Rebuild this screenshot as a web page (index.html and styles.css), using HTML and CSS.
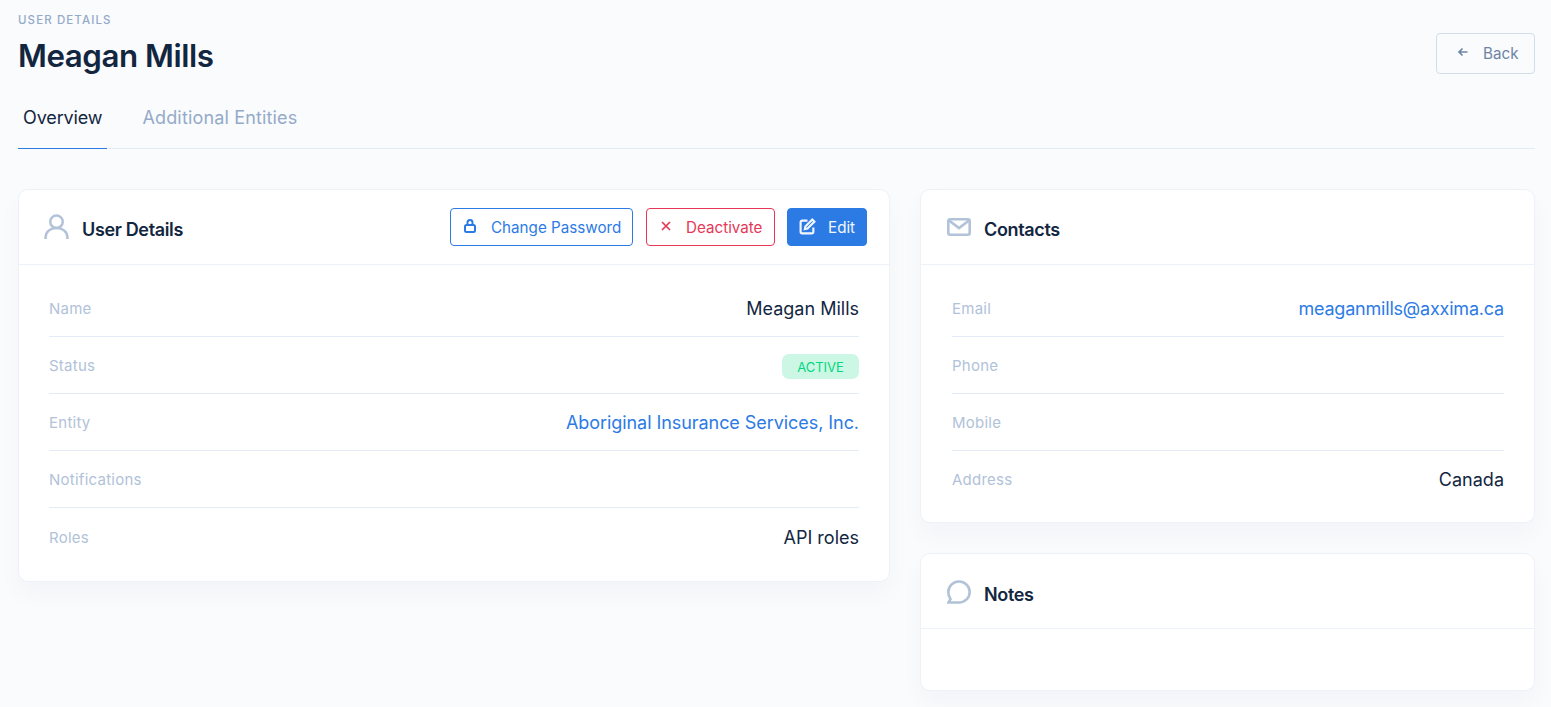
FILE: index.html
```html
<!DOCTYPE html>
<html lang="en">
<head>
<meta charset="utf-8">
<title>Meagan Mills</title>
<link rel="stylesheet" href="styles.css">
</head>
<body>
<div class="page">
  <header class="page-head">
    <div>
      <div class="eyebrow">USER DETAILS</div>
      <h1 class="title">Meagan Mills</h1>
    </div>
    <button class="btn btn-back">
      <svg class="ico-sm" viewBox="0 0 12 12" fill="none" stroke="currentColor" stroke-width="1.6"><path d="M10.500 6H2M5.500 2.500 2 6l3.500 3.500"/></svg>
      <span>Back</span>
    </button>
  </header>
  <nav class="tabs">
    <a class="tab tab-active">Overview</a>
    <a class="tab tab-other">Additional Entities</a>
  </nav>
  <main class="columns">
    <section class="card">
      <div class="card-head">
        <svg class="card-ico" viewBox="0 0 24 24" fill="none" stroke="currentColor" stroke-width="2.4"><circle cx="12" cy="7.500" r="6"/><path d="M1.500 24v-1.500C1.500 17 6 13.500 12 13.500s10.500 3.500 10.500 9V24"/></svg>
        <h2 class="card-title">User Details</h2>
        <div class="actions">
          <button class="btn btn-blue">
            <svg class="ico-md" viewBox="0 0 14 14" fill="none" stroke="currentColor" stroke-width="2"><rect x="2" y="6" width="10" height="7" rx="1.500"/><path d="M4.500 6V3.500a2.500 2.500 0 0 1 5 0V6"/></svg>
            <span>Change Password</span>
          </button>
          <button class="btn btn-red">
            <svg class="ico-md" viewBox="0 0 14 14" fill="none" stroke="currentColor" stroke-width="1.700"><path d="M3 3l8 8M11 3l-8 8"/></svg>
            <span>Deactivate</span>
          </button>
          <button class="btn btn-solid">
            <svg class="ico-lg" viewBox="0 0 16 16" fill="none" stroke="currentColor" stroke-width="2"><path d="M13.500 9v4a1.500 1.500 0 0 1-1.500 1.500H3A1.500 1.500 0 0 1 1.500 13V4A1.500 1.500 0 0 1 3 2.500h5"/><path d="M6 8l6.500-6.500 2 2L8 10l-2.500.5z"/></svg>
            <span>Edit</span>
          </button>
        </div>
      </div>
      <dl class="rows rows-main">
        <div class="row"><dt>Name</dt><dd>Meagan Mills</dd></div>
        <div class="row"><dt>Status</dt><dd><span class="badge">ACTIVE</span></dd></div>
        <div class="row"><dt>Entity</dt><dd class="link">Aboriginal Insurance Services, Inc.</dd></div>
        <div class="row"><dt>Notifications</dt><dd></dd></div>
        <div class="row"><dt>Roles</dt><dd>API roles</dd></div>
      </dl>
    </section>
    <div class="stack">
      <section class="card card-side">
        <div class="card-head">
          <svg class="card-ico card-ico-mail" viewBox="0 0 24 18" fill="none" stroke="currentColor" stroke-width="2.600"><rect x="1.300" y="1.300" width="21.400" height="15.400" rx="2"/><path d="M2 2.500 12 10l10-7.500"/></svg>
          <h2 class="card-title">Contacts</h2>
        </div>
        <dl class="rows rows-side">
          <div class="row"><dt>Email</dt><dd class="link link-tight">meaganmills@axxima.ca</dd></div>
          <div class="row"><dt>Phone</dt><dd></dd></div>
          <div class="row"><dt>Mobile</dt><dd></dd></div>
          <div class="row"><dt>Address</dt><dd>Canada</dd></div>
        </dl>
      </section>
      <section class="card card-side">
        <div class="card-head card-head-notes">
          <svg class="card-ico card-ico-note" viewBox="0 0 24 24" fill="none" stroke="currentColor" stroke-width="2.600"><path d="M3.500 19.500C2 17.500 1.300 15.500 1.300 12.500a10.700 10.500 0 1 1 10.700 10.500H1.500z"/></svg>
          <h2 class="card-title">Notes</h2>
        </div>
        <div class="empty"></div>
      </section>
    </div>
  </main>
</div>
</body>
</html>
```
FILE: styles.css
```css
* { box-sizing: border-box; }
html, body { margin: 0; height: 100%; }
body {
  background: #f9fbfd;
  color: #12263f;
  font-family: "Inter", "Liberation Sans", sans-serif;
  overflow: hidden;
}
.page { padding: 14px 16px 0 18px; }
.page-head { display: flex; justify-content: space-between; align-items: flex-start; height: 75px; }
.eyebrow { font-size: 11.500px; font-weight: 500; letter-spacing: 1.1px; color: #95aac9; line-height: 13px; }
.title { margin: 10px 0 0; font-size: 31.300px; font-weight: 600; line-height: 38px; letter-spacing: -0.45px; }
.btn {
  display: inline-flex; align-items: center; height: 38px; padding: 0 10px 0 12px;
  border-radius: 4px; font: inherit; font-size: 15.200px; background: transparent; border: 1px solid;
  white-space: nowrap;
}
.btn-back { margin-top: 19px; width: 99px; height: 41px; border-color: #d2ddec; color: #6e84a3; padding-left: 20px; gap: 14px; }
.btn-blue { border-color: #2c7be5; color: #2c7be5; gap: 14px; width: 183px; margin-right: 1px; }
.btn-red { border-color: #e63757; color: #e63757; gap: 13px; width: 129px; }
.btn-solid { background: #2c7be5; border-color: #2c7be5; color: #f3f7fd; gap: 12px; width: 80px; padding-left: 11px; }
.ico-sm { width: 12px; height: 12px; margin-top: -3px; }
.ico-md { width: 14px; height: 14px; margin-top: -2px; }
.ico-lg { width: 17px; height: 17px; margin-top: -2px; }
.tabs { display: flex; gap: 30px; height: 60px; border-bottom: 1px solid #e3ebf6; }
.tab { padding: 0 5px; font-size: 18px; line-height: 58px; color: #95aac9; height: 60px; }
.tab-active { color: #12263f; border-bottom: 1px solid #2c7be5; letter-spacing: -0.13px; }
.tab-other { letter-spacing: 0.16px; }
.columns { display: grid; grid-template-columns: 872px 615px; gap: 30px; margin-top: 40px; align-items: start; }
.stack { display: flex; flex-direction: column; gap: 30px; }
.card {
  background: #fff; border: 1px solid #edf2f9; border-radius: 10px;
  box-shadow: 0 12px 24px rgba(18, 38, 63, 0.03);
}
.card-head { display: flex; align-items: center; height: 75px; padding: 0 22px 0 25px; border-bottom: 1px solid #edf2f9; }
.card-side .card-head { padding-left: 26px; }
.card-ico { width: 25px; height: 25px; color: #b1c2d9; margin-top: -2px; flex: none; }
.card-ico-mail { width: 24px; height: 18px; margin-top: -1px; }
.card-ico-note { width: 24px; margin-top: 0; }
.card-title { margin: 4px 0 0 13px; font-size: 18px; font-weight: 600; letter-spacing: -0.35px; }
.card-head-notes .card-title { margin-top: 6px; }
.actions { margin-left: auto; display: flex; gap: 12px; margin-top: 0; }
.rows { margin: 0; padding: 15px 30px; }
.rows-main .row:last-child { height: 58px; }
.rows-side { padding: 15px 30px 14px 31px; }
.row { display: flex; justify-content: space-between; align-items: center; height: 57px; border-bottom: 1px solid #e3ebf6; }
.row:last-child { border-bottom: 0; }
dt { font-size: 15px; letter-spacing: 0.25px; color: #b1c2d9; }
dd { margin: 0; font-size: 18px; color: #12263f; }
.link { color: #2c7be5; letter-spacing: -0.06px; }
.link-tight { letter-spacing: -0.2px; }
.badge {
  display: block; width: 77px; height: 25px; line-height: 27px; text-align: center; border-radius: 7px;
  background: #ccf7e5; color: #00d97e; font-size: 13px; margin-top: 2px;
}
.empty { height: 61px; }
```
